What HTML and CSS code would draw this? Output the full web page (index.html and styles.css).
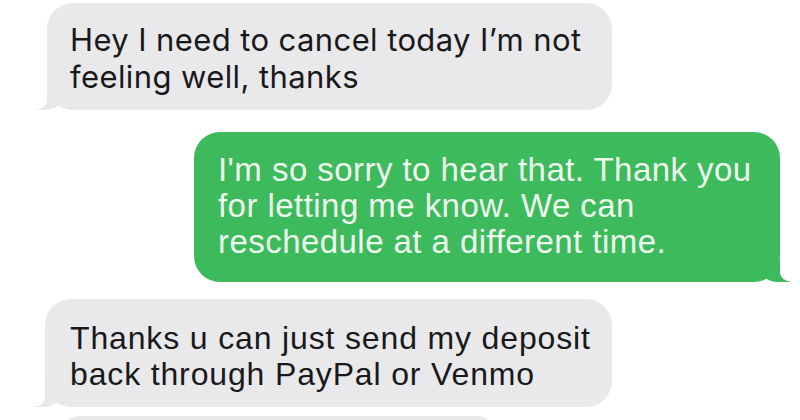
FILE: index.html
```html
<!DOCTYPE html>
<html lang="en">
<head>
<meta charset="utf-8">
<title>Messages</title>
<link rel="stylesheet" href="styles.css">
</head>
<body>
<div class="thread">
  <div class="topline"></div>
  <div class="msg in m1">Hey I need to cancel today I’m not<br>feeling well, thanks</div>
  <div class="msg out m2">I'm so sorry to hear that. Thank you<br>for letting me know. We can<br>reschedule at a different time.</div>
  <div class="msg in m3">Thanks u can just send my deposit<br>back through PayPal or Venmo</div>
  <div class="msg in m4">&nbsp;</div>
</div>
</body>
</html>
```
FILE: styles.css
```css
html, body {
  margin: 0;
  padding: 0;
  background: #ffffff;
}
.thread {
  width: 800px;
  height: 420px;
  overflow: hidden;
  display: flex;
  flex-direction: column;
  align-items: flex-start;
}
.topline {
  align-self: stretch;
  height: 2px;
  background: #e6e6e8;
  margin-bottom: 3px;
}
.msg {
  position: relative;
  box-sizing: border-box;
  border-radius: 26px;
  white-space: nowrap;
}
.in {
  background: #e9e9eb;
  color: #19191b;
  font-family: Inter, "Liberation Sans", sans-serif;
  font-size: 31px;
  line-height: 37px;
  letter-spacing: 0.4px;
}
.in::before {
  content: "";
  position: absolute;
  left: -14px;
  bottom: 0;
  width: 30px;
  height: 22px;
  background: #e9e9eb;
  border-bottom-right-radius: 18px 14px;
}
.in::after {
  content: "";
  position: absolute;
  left: -20px;
  bottom: 0;
  width: 20px;
  height: 24px;
  background: #ffffff;
  border-bottom-right-radius: 12px 10px;
}
.out {
  background: #3dba5b;
  color: #eef9ee;
  font-family: "Liberation Sans", Arial, sans-serif;
  font-size: 33px;
  line-height: 36px;
  letter-spacing: 0.45px;
}
.out::before {
  content: "";
  position: absolute;
  right: -10px;
  bottom: 0;
  width: 30px;
  height: 22px;
  background: #3dba5b;
  border-bottom-left-radius: 18px 14px;
}
.out::after {
  content: "";
  position: absolute;
  right: -20px;
  bottom: 0;
  width: 20px;
  height: 24px;
  background: #ffffff;
  border-bottom-left-radius: 12px 10px;
}
.m1 {
  margin-left: 47px;
  width: 565px;
  padding: 18px 0 15px 23px;
}
.m2 {
  margin-top: 22px;
  margin-left: 194px;
  width: 586px;
  padding: 20px 0 22px 24px;
}
.m3 {
  margin-top: 17px;
  margin-left: 45px;
  width: 567px;
  padding: 21px 0 15px 25px;
  font-family: "Liberation Sans", Arial, sans-serif;
  font-size: 32px;
  line-height: 36px;
  letter-spacing: 0.85px;
}
.m4 {
  margin-top: 9px;
  margin-left: 61px;
  width: 434px;
  height: 60px;
}
.m4::before, .m4::after {
  display: none;
}
```
